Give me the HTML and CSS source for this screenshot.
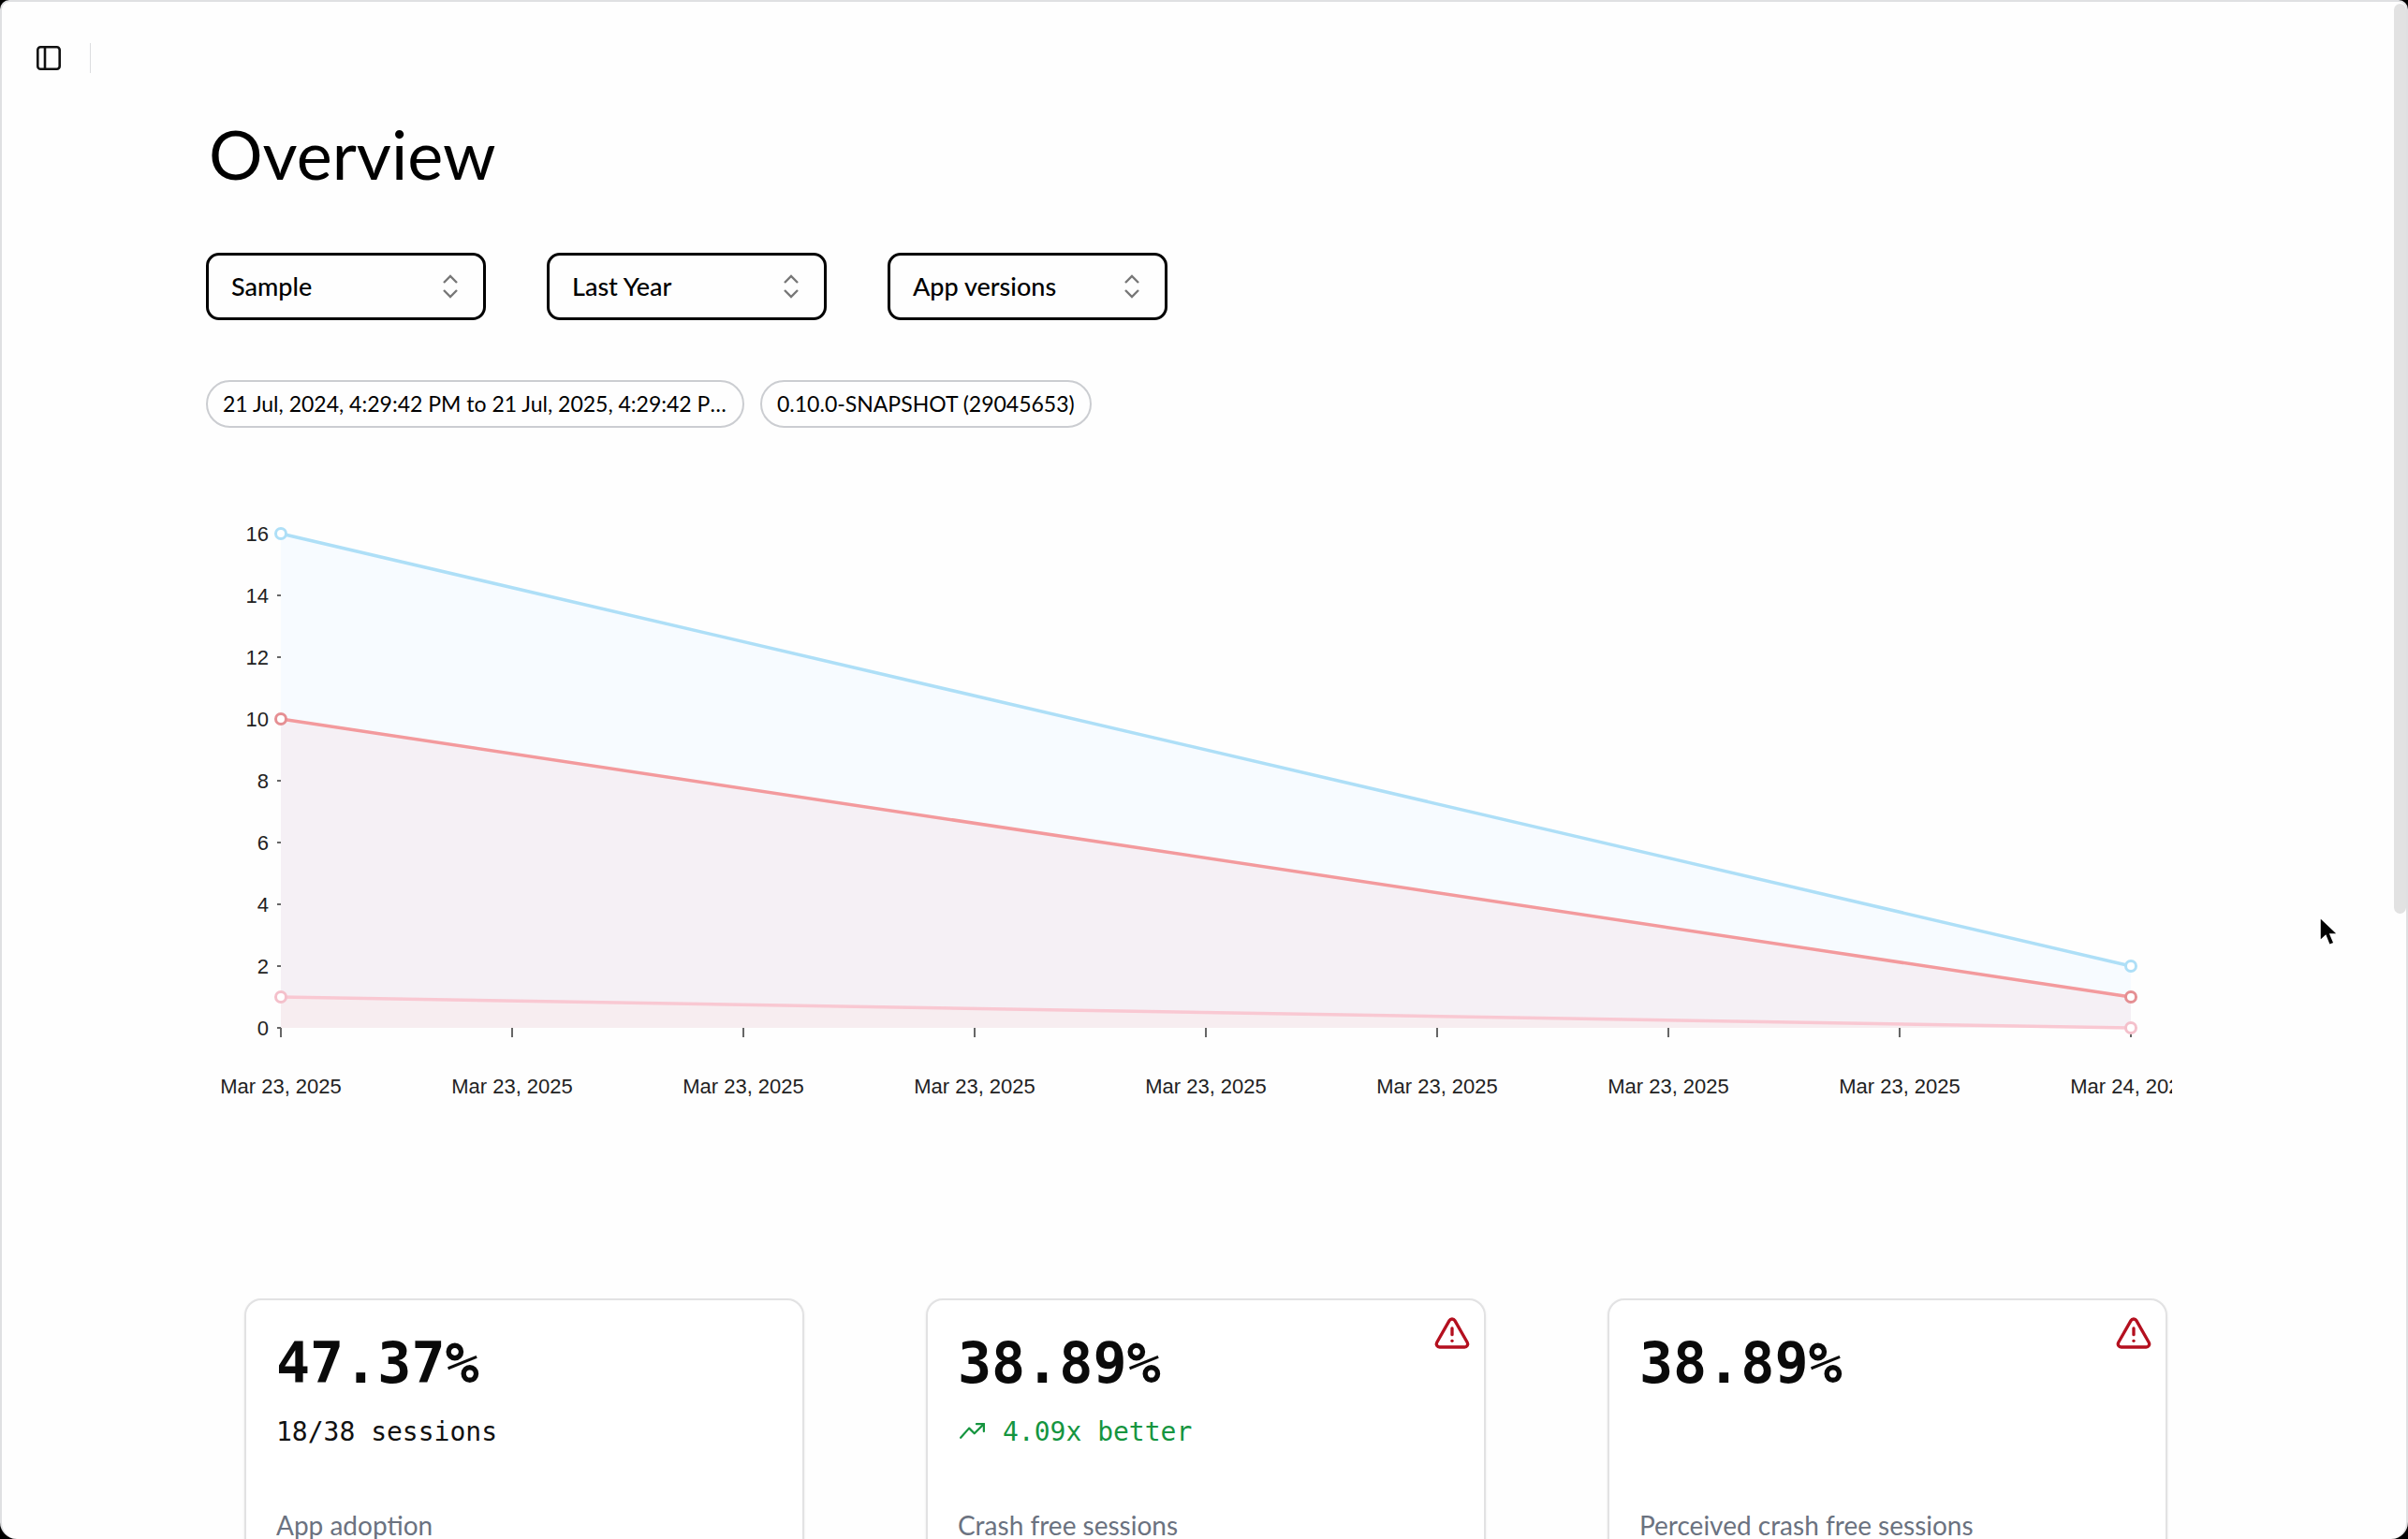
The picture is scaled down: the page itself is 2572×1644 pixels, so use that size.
FILE: index.html
```html
<!DOCTYPE html>
<html lang="en">
<head>
<meta charset="utf-8">
<title>Overview</title>
<link rel="stylesheet" href="styles.css">
</head>
<body>
<div class="window">
  <header class="topbar">
    <svg class="panel-icon" viewBox="0 0 26 26" fill="none" stroke="#111" stroke-width="2.6"><rect x="1.3" y="1.3" width="23.4" height="23.4" rx="3"/><path d="M9 1.3v23.4"/></svg>
    <span class="topbar-sep"></span>
  </header>
  <main class="content">
    <h1 class="title">Overview</h1>
    <div class="filters">
      <div class="select"><span>Sample</span><svg class="chev" viewBox="0 0 18 26" fill="none" stroke="#777" stroke-width="2.4"><path d="M2 9l7-7 7 7M2 17l7 7 7-7"/></svg></div>
      <div class="select"><span>Last Year</span><svg class="chev" viewBox="0 0 18 26" fill="none" stroke="#777" stroke-width="2.4"><path d="M2 9l7-7 7 7M2 17l7 7 7-7"/></svg></div>
      <div class="select"><span>App versions</span><svg class="chev" viewBox="0 0 18 26" fill="none" stroke="#777" stroke-width="2.4"><path d="M2 9l7-7 7 7M2 17l7 7 7-7"/></svg></div>
    </div>
    <div class="chips">
      <span class="chip chip-date">21 Jul, 2024, 4:29:42 PM to 21 Jul, 2025, 4:29:42 PM</span>
      <span class="chip">0.10.0-SNAPSHOT (29045653)</span>
    </div>
    <svg class="chart" viewBox="220 520 2100 680" width="2100" height="680">
      <polygon class="area-blue" points="300,570 2276,1032 2276,1098 300,1098"/>
      <polygon class="area-red" points="300,768 2276,1065 2276,1098 300,1098"/>
      <polygon class="area-pink" points="300,1065 2276,1098 300,1098"/>
      <g class="ticks">
        <path d="M296 570h4M296 636h4M296 702h4M296 768h4M296 834h4M296 900h4M296 966h4M296 1032h4M296 1098h4"/>
        <path d="M300 1098v10M547 1098v10M794 1098v10M1041 1098v10M1288 1098v10M1535 1098v10M1782 1098v10M2029 1098v10M2276 1098v10"/>
      </g>
      <g class="ylabels">
        <text x="287" y="578">16</text><text x="287" y="644">14</text><text x="287" y="710">12</text><text x="287" y="776">10</text><text x="287" y="842">8</text><text x="287" y="908">6</text><text x="287" y="974">4</text><text x="287" y="1040">2</text><text x="287" y="1106">0</text>
      </g>
      <g class="xlabels">
        <text x="300" y="1168">Mar 23, 2025</text><text x="547" y="1168">Mar 23, 2025</text><text x="794" y="1168">Mar 23, 2025</text><text x="1041" y="1168">Mar 23, 2025</text><text x="1288" y="1168">Mar 23, 2025</text><text x="1535" y="1168">Mar 23, 2025</text><text x="1782" y="1168">Mar 23, 2025</text><text x="2029" y="1168">Mar 23, 2025</text><text x="2276" y="1168">Mar 24, 2025</text>
      </g>
      <line class="ln-blue" x1="300" y1="570" x2="2276" y2="1032"/>
      <line class="ln-red" x1="300" y1="768" x2="2276" y2="1065"/>
      <line class="ln-pink" x1="300" y1="1065" x2="2276" y2="1098"/>
      <circle class="pt-blue" cx="300" cy="570" r="5.5"/><circle class="pt-blue" cx="2276" cy="1032" r="5.5"/>
      <circle class="pt-red" cx="300" cy="768" r="5.5"/><circle class="pt-red" cx="2276" cy="1065" r="5.5"/>
      <circle class="pt-pink" cx="300" cy="1065" r="5.5"/><circle class="pt-pink" cx="2276" cy="1098" r="5.5"/>
    </svg>
    <section class="cards">
      <article class="card">
        <div class="value">47.37%</div>
        <div class="sub">18/38 sessions</div>
        <div class="label">App adoption</div>
      </article>
      <article class="card">
        <svg class="warn" viewBox="0 0 24 24" fill="none" stroke="#b4101f" stroke-width="2" stroke-linecap="round" stroke-linejoin="round"><path d="m21.73 18-8-14a2 2 0 0 0-3.48 0l-8 14A2 2 0 0 0 4 21h16a2 2 0 0 0 1.73-3"/><path d="M12 9v4"/><path d="M12 17h.01"/></svg>
        <div class="value">38.89%</div>
        <div class="sub good"><svg class="trend" viewBox="0 0 24 16" fill="none" stroke="#15953f" stroke-width="2" stroke-linecap="round" stroke-linejoin="round"><path d="M23 1l-9 9-5-5-8 9"/><path d="M16 1h7v7"/></svg>4.09x better</div>
        <div class="label">Crash free sessions</div>
      </article>
      <article class="card">
        <svg class="warn" viewBox="0 0 24 24" fill="none" stroke="#b4101f" stroke-width="2" stroke-linecap="round" stroke-linejoin="round"><path d="m21.73 18-8-14a2 2 0 0 0-3.48 0l-8 14A2 2 0 0 0 4 21h16a2 2 0 0 0 1.73-3"/><path d="M12 9v4"/><path d="M12 17h.01"/></svg>
        <div class="value">38.89%</div>
        <div class="sub">&nbsp;</div>
        <div class="label">Perceived crash free sessions</div>
      </article>
    </section>
  </main>
  <div class="scrollbar"></div>
  <svg class="cursor" viewBox="0 0 22 34"><path d="M2 1v25l6-5.500 4 10 5-2-4-9.500h8z" fill="#000" stroke="#fff" stroke-width="1.500"/></svg>
</div>
</body>
</html>
```

FILE: styles.css
```css
* { box-sizing: border-box; }
html, body { margin: 0; padding: 0; background: #000; }
body { width: 2572px; height: 1644px; overflow: hidden; }
.window {
  position: relative;
  width: 2572px;
  height: 1644px;
  overflow: hidden;
  background: #fefefe;
  border-top: 2px solid #dfe0e2;
  border-left: 2px solid #dfe0e2;
  border-right: 2px solid #dfe0e2;
  border-radius: 10px 10px 18px 18px;
  font-family: Lato, "Liberation Sans", sans-serif;
  color: #000;
}
.topbar { display: flex; align-items: center; height: 32px; margin: 44px 0 0 37px; gap: 31px; }
.panel-icon { width: 26px; height: 26px; }
.topbar-sep { width: 1px; height: 32px; background: #dcdde0; }
.content { padding-left: 218px; }
.title { margin: 38px 0 0 3px; font-size: 72px; line-height: 96px; font-weight: 400; letter-spacing: 0; height: 96px; }
.filters { display: flex; gap: 65px; margin-top: 58px; }
.select {
  display: flex; align-items: center; justify-content: space-between;
  width: 299px; height: 72px;
  padding: 0 26px 0 24px;
  border: 3px solid #000; border-radius: 14px;
  font-size: 27px; font-weight: 500;
}
.select span { position: relative; top: -1px; }
.chev { width: 18px; height: 26px; }
.chips { display: flex; gap: 17px; margin-top: 64px; }
.chip {
  display: block; height: 51px; line-height: 46px;
  padding: 0 16px;
  border: 2.5px solid #cbcdd1; border-radius: 26px;
  font-size: 23px; white-space: nowrap;
}
.chip-date { width: 575px; overflow: hidden; text-overflow: ellipsis; }
.chart { display: block; margin: 63px 0 0 0; }
.chart text { font-family: "Liberation Sans", Arial, sans-serif; font-size: 22px; fill: #222; }
.ylabels text { text-anchor: end; }
.xlabels text { text-anchor: middle; }
.ticks path { stroke: #666; stroke-width: 2; fill: none; }
.area-blue { fill: #f7fbff; }
.area-red { fill: #f5f0f5; }
.area-pink { fill: #f7edf0; }
.ln-blue, .ln-red, .ln-pink { stroke-width: 3.500; }
.ln-blue { stroke: #aedff7; }
.ln-red { stroke: #f39a9d; }
.ln-pink { stroke: #f9c8d2; }
.pt-blue, .pt-red, .pt-pink { fill: #fff; stroke-width: 3; }
.pt-blue { stroke: #aedff7; }
.pt-red { stroke: #e58f93; }
.pt-pink { stroke: #f4c0cb; }
.cards { display: grid; grid-template-columns: repeat(3, 598px); column-gap: 130px; margin: 187px 0 0 41px; }
.card {
  position: relative; height: 400px;
  padding: 32px 32px 0;
  border: 2.500px solid #e2e2e3; border-radius: 18px;
  background: #fff;
  box-shadow: 0 1px 3px rgba(0,0,0,.08);
}
.value { font-family: "DejaVu Sans Mono", "Liberation Mono", monospace; font-weight: 700; font-size: 60px; line-height: 70px; color: #0a0a0a; }
.sub { display: flex; align-items: center; gap: 17px; margin-top: 18px; height: 40px; font-family: "DejaVu Sans Mono", "Liberation Mono", monospace; font-size: 28px; color: #111; }
.good { color: #15953f; }
.trend { width: 31px; height: 18px; }
.label { margin-top: 62px; font-size: 28px; line-height: 36px; color: #6b7280; }
.warn { position: absolute; top: 15px; right: 14px; width: 40px; height: 40px; }
.scrollbar { position: absolute; top: 2px; right: 0; width: 13px; height: 972px; background: #e2e2e2; border-radius: 7px; }
.cursor { position: absolute; left: 2474px; top: 977px; width: 22px; height: 34px; }
```
